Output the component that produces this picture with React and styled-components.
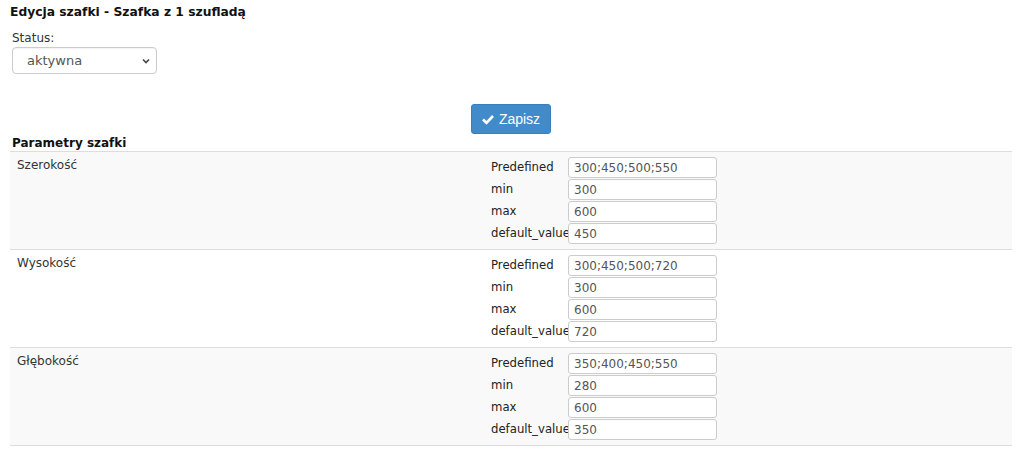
import React from "react";
import styled, { createGlobalStyle } from "styled-components";

const GlobalStyle = createGlobalStyle`
  body {
    margin: 0;
    background: #fff;
    font-family: "DejaVu Sans", Verdana, sans-serif;
    font-size: 12px;
    color: #333;
  }
`;

const Page = styled.div`
  width: 1002px;
  padding: 4px 12px 0 10px;
`;

const Title = styled.h3`
  margin: 0;
  font-size: 12.3px;
  font-weight: bold;
  color: #111;
  line-height: 16px;
`;

const Field = styled.div`
  padding: 10px 0 0 2px;
`;

const Label = styled.label`
  display: block;
  font-size: 12px;
  line-height: 16px;
  color: #333;
  margin-bottom: 1px;
`;

const SelectBox = styled.div`
  width: 145px;
  height: 27px;
  box-sizing: border-box;
  border: 1px solid #ccc;
  border-radius: 4px;
  display: flex;
  align-items: center;
  justify-content: space-between;
  padding: 0 5px 0 14px;
  color: #555;
  font-size: 13px;
  box-shadow: inset 0 1px 1px rgba(0, 0, 0, 0.06);
`;

const Actions = styled.div`
  display: flex;
  justify-content: center;
  padding: 30px 0 0;
`;

const SaveButton = styled.button`
  display: flex;
  align-items: center;
  gap: 5px;
  height: 30px;
  padding: 0 10px 0 10px;
  background: #428bca;
  border: 1px solid #3a7fbd;
  border-radius: 3px;
  color: #fff;
  font-family: "Liberation Sans", Arial, sans-serif;
  font-size: 14px;
  cursor: pointer;
`;

const SectionTitle = styled.div`
  font-weight: bold;
  font-size: 12px;
  line-height: 16px;
  color: #111;
  padding: 1px 0 0 2px;
`;

const Table = styled.div`
  border-top: 1px solid #ddd;
`;

const Row = styled.div`
  display: grid;
  grid-template-columns: 474px 1fr;
  background: ${(p) => (p.$striped ? "#f9f9f9" : "#fff")};
  border-bottom: 1px solid #ddd;
`;

const NameCell = styled.div`
  padding: 5px 7px;
  line-height: 16px;
`;

const ValuesCell = styled.div`
  padding: 5px 0 5px 7px;
`;

const ParamGrid = styled.div`
  display: grid;
  grid-template-columns: 77px 150px;
  row-gap: 1px;
  align-items: center;
`;

const ParamLabel = styled.span`
  font-size: 11.7px;
  line-height: 21px;
  color: #222;
  white-space: nowrap;
`;

const ParamInput = styled.input`
  box-sizing: border-box;
  width: 149px;
  height: 21px;
  border: 1px solid #ccc;
  border-radius: 3px;
  padding: 0 5px;
  font-family: "DejaVu Sans", Verdana, sans-serif;
  font-size: 12px;
  color: #555;
  background: #fff;
`;

const params = [
  { name: "Szerokość", values: ["300;450;500;550", "300", "600", "450"] },
  { name: "Wysokość", values: ["300;450;500;720", "300", "600", "720"] },
  { name: "Głębokość", values: ["350;400;450;550", "280", "600", "350"] },
];

const keys = ["Predefined", "min", "max", "default_value"];

const Chevron = () => (
  <svg width="10" height="10" viewBox="0 0 10 10">
    <path d="M2 3.5 L5 6.5 L8 3.5" fill="none" stroke="#444" strokeWidth="1.6" />
  </svg>
);

const Check = () => (
  <svg width="12" height="11" viewBox="0 0 12 11">
    <path d="M1 5.5 L4.5 9 L11 2" fill="none" stroke="#fff" strokeWidth="2.6" />
  </svg>
);

export default function App() {
  return (
    <>
      <GlobalStyle />
      <Page>
        <Title>Edycja szafki - Szafka z 1 szufladą</Title>
        <Field>
          <Label>Status:</Label>
          <SelectBox>
            <span>aktywna</span>
            <Chevron />
          </SelectBox>
        </Field>
        <Actions>
          <SaveButton>
            <Check />
            Zapisz
          </SaveButton>
        </Actions>
        <SectionTitle>Parametry szafki</SectionTitle>
        <Table>
          {params.map((p, i) => (
            <Row key={p.name} $striped={i % 2 === 0}>
              <NameCell>{p.name}</NameCell>
              <ValuesCell>
                <ParamGrid>
                  {keys.map((k, j) => (
                    <React.Fragment key={k}>
                      <ParamLabel>{k}</ParamLabel>
                      <ParamInput defaultValue={p.values[j]} />
                    </React.Fragment>
                  ))}
                </ParamGrid>
              </ValuesCell>
            </Row>
          ))}
        </Table>
      </Page>
    </>
  );
}
